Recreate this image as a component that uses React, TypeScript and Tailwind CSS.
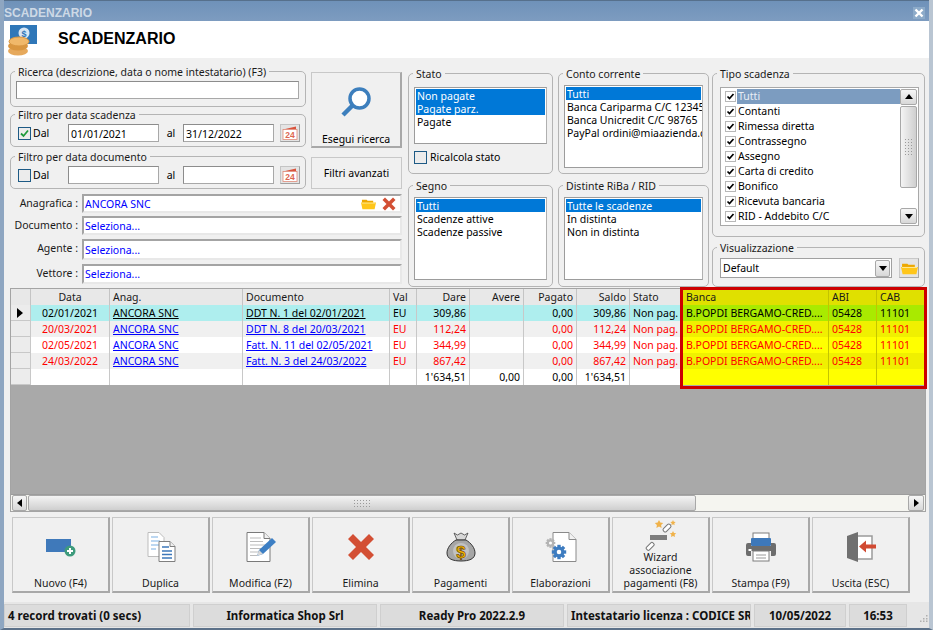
// App.tsx
import type { ReactNode } from "react";

function FolderIcon({ className }: { className?: string }) {
  return (
    <svg viewBox="0 0 16 12" className={className}>
      <path d="M1 1.500h5l1 1h6v2.500H1z" fill="#eda800" />
      <path d="M0 4.500h16l-1.500 7H1.500z" fill="#ffc61a" />
      <path d="M1 5h14" stroke="#fff2b0" strokeWidth="0.800" />
    </svg>
  );
}

function CrossIcon({ className }: { className?: string }) {
  return (
    <svg viewBox="0 0 32 32" className={className}>
      <path d="M3 8l5-5 8 8 8-8 5 5-8 8 8 8-5 5-8-8-8 8-5-5 8-8z" fill="#d34f34" />
    </svg>
  );
}

function Gear({ cx, cy, r, color }: { cx: number; cy: number; r: number; color: string }) {
  return (
    <g>
      {[0, 45, 90, 135].map((a) => (
        <rect
          key={a}
          x={cx - r * 0.28}
          y={cy - r * 1.2}
          width={r * 0.56}
          height={r * 2.4}
          fill={color}
          transform={`rotate(${a} ${cx} ${cy})`}
        />
      ))}
      <circle cx={cx} cy={cy} r={r * 0.9} fill={color} />
      <circle cx={cx} cy={cy} r={r * 0.38} fill="#fff" />
    </g>
  );
}

function CalendarButton() {
  return (
    <div className="w-[20px] h-[18px] ml-[6px] shrink-0 bg-[#e4e4e4] border border-[#c4c4c4] border-r-[#a0a0a0] border-b-[#a0a0a0] flex items-center justify-center">
      <svg viewBox="0 0 16 14" className="w-[16px] h-[14px]">
        <path d="M1 3.500L14 .500v3H1z" fill="#d9533c" />
        <rect x="1" y="3.500" width="14" height="10" fill="#fff" stroke="#e08a78" strokeWidth="0.800" />
        <text x="8" y="12" textAnchor="middle" fontSize="8.500" fontWeight="700" fill="#dd6650" fontFamily="Liberation Sans">
          24
        </text>
      </svg>
    </div>
  );
}

function Group({ title, className, children }: { title: string; className: string; children: ReactNode }) {
  return (
    <fieldset className={`border border-[#b4b4b4] rounded-[5px] shrink-0 ${className}`}>
      <legend className="ml-[4px] px-[3px] pt-[2px] leading-[12px] text-[#1a1a1a] whitespace-nowrap">{title}</legend>
      {children}
    </fieldset>
  );
}

function Field({ value, className }: { value?: string; className?: string }) {
  return (
    <div className={`h-[18px] bg-white border border-[#a8a8a8] border-t-[#8c8c8c] border-l-[#8c8c8c] pl-[2px] leading-[18px] text-black ${className ?? ""}`}>
      {value}
    </div>
  );
}

function CheckBox({ checked, className }: { checked?: boolean; className?: string }) {
  return (
    <div className={`w-[13px] h-[13px] border border-[#1d5a85] bg-[#ececec] shrink-0 flex items-center justify-center ${className ?? ""}`}>
      {checked && (
        <svg viewBox="0 0 11 11" className="w-[11px] h-[11px]">
          <path d="M2 5.500l2.500 2.500L9 2.500" fill="none" stroke="#1f9a3c" strokeWidth="1.800" />
        </svg>
      )}
    </div>
  );
}

function DateFilter({ title, checked, from, to }: { title: string; checked?: boolean; from?: string; to?: string }) {
  return (
    <Group title={title} className="w-[296px] h-[40px]">
      <div className="flex items-center pl-[7px] mt-[3px]">
        <CheckBox checked={checked} />
        <span className="w-[37px] pl-[2px] pt-[2px]">Dal</span>
        <Field value={from} className="w-[91px]" />
        <span className="w-[24px] pt-[2px] text-center">al</span>
        <Field value={to} className="w-[91px]" />
        <CalendarButton />
      </div>
    </Group>
  );
}

function PickerRow({ label, value, className, tools }: { label: string; value: string; className: string; tools?: boolean }) {
  return (
    <div className={`flex items-stretch ${className}`}>
      <div className="w-[68px] text-right leading-[19px] text-[#1a1a1a] whitespace-nowrap">{label} :</div>
      <div className="ml-[4px] flex-1 flex items-center bg-white border-2 border-[#a4a4a4] border-r-[#e8e8e8] border-b-[#e8e8e8] pl-[1px] text-[#0000ff]">
        <span className="flex-1 pt-[2px]">{value}</span>
        {tools && (
          <>
            <FolderIcon className="w-[15px] h-[12px] mr-[5px]" />
            <CrossIcon className="w-[16px] h-[16px] mr-[3px]" />
          </>
        )}
      </div>
    </div>
  );
}

function ListBox({ items, selected, className }: { items: string[]; selected: number[]; className: string }) {
  return (
    <div className={`border border-[#9c9c9c] border-r-[#b0b0b0] bg-white p-[1px] overflow-hidden ${className}`}>
      {items.map((item, i) => (
        <div
          key={item}
          className={`h-[13px] leading-[15px] pl-[1px] whitespace-nowrap ${selected.includes(i) ? "bg-[#0078d7] text-white" : "text-black"}`}
        >
          {item}
        </div>
      ))}
    </div>
  );
}

const tipoScadenza = [
  "Tutti",
  "Contanti",
  "Rimessa diretta",
  "Contrassegno",
  "Assegno",
  "Carta di credito",
  "Bonifico",
  "Ricevuta bancaria",
  "RID - Addebito C/C",
];

function ArrowButton({ dir, className }: { dir: "up" | "down" | "left" | "right"; className: string }) {
  const points = { up: "1,7 5,2 9,7", down: "1,3 5,8 9,3", left: "7,1 2,5 7,9", right: "3,1 8,5 3,9" }[dir];
  return (
    <div className={`shrink-0 flex items-center justify-center rounded-[2px] border border-[#a8a8a8] bg-gradient-to-b from-[#f6f6f6] to-[#d8d8d8] ${className}`}>
      <svg viewBox="0 0 10 10" className="w-[10px] h-[10px]">
        <polygon points={points} fill="#000" />
      </svg>
    </div>
  );
}

function Grip({ vertical }: { vertical?: boolean }) {
  return (
    <div className={vertical ? "grid grid-cols-3 gap-[2px]" : "grid grid-cols-6 gap-[2px]"}>
      {Array.from({ length: 18 }).map((_, i) => (
        <div key={i} className="w-[1px] h-[1px] bg-[#9a9a9a]" />
      ))}
    </div>
  );
}

const columns = ["", "Data", "Anag.", "Documento", "Val", "Dare", "Avere", "Pagato", "Saldo", "Stato", "Banca", "ABI", "CAB"];
const rightCols = [5, 6, 7, 8];

const rows = [
  ["", "02/01/2021", "ANCORA SNC", "DDT N. 1 del 02/01/2021", "EU", "309,86", "", "0,00", "309,86", "Non pag.", "B.POPDI BERGAMO-CRED....", "05428", "11101"],
  ["", "20/03/2021", "ANCORA SNC", "DDT N. 8 del 20/03/2021", "EU", "112,24", "", "0,00", "112,24", "Non pag.", "B.POPDI BERGAMO-CRED....", "05428", "11101"],
  ["", "02/05/2021", "ANCORA SNC", "Fatt. N. 11 del 02/05/2021", "EU", "344,99", "", "0,00", "344,99", "Non pag.", "B.POPDI BERGAMO-CRED....", "05428", "11101"],
  ["", "24/03/2022", "ANCORA SNC", "Fatt. N. 3 del 24/03/2022", "EU", "867,42", "", "0,00", "867,42", "Non pag.", "B.POPDI BERGAMO-CRED....", "05428", "11101"],
  ["", "", "", "", "", "1'634,51", "0,00", "0,00", "1'634,51", "", "", "", ""],
];

function cellBg(row: number, col: number) {
  if (col === 0) return "bg-[#ececec] border-b border-b-[#c8c8c8]";
  if (col >= 10) {
    if (row === 0) return "bg-[#a9ea00]";
    return row % 2 === 1 ? "bg-[#f0f000]" : "bg-[#ffff00]";
  }
  if (row === 0) return "bg-[#aeeeee]";
  return row % 2 === 1 ? "bg-[#f0f0f0]" : "bg-white";
}

function cellText(row: number, col: number) {
  if (row === 4 || row === 0) {
    return "text-black";
  }
  return col === 2 || col === 3 ? "text-[#0000ff]" : "text-[#ff0000]";
}

function Grid() {
  return (
    <div className="grid grid-cols-[20px_79px_133px_147px_27px_53px_54px_53px_53px_53px_146px_48px_48px] auto-rows-[16px]">
      {columns.map((c, i) => (
        <div
          key={i}
          className={`leading-[16px] px-[3px] border-r whitespace-nowrap overflow-hidden text-[#1a1a1a] ${
            i >= 10 ? "bg-[#e0e000] border-[#c4c400]" : "bg-[#e8e8e8] border-[#c4c4c4]"
          } ${i === 1 ? "text-center" : ""} ${rightCols.includes(i) ? "text-right" : ""}`}
        >
          {c}
        </div>
      ))}
      {rows.map((row, r) =>
        row.map((cell, c) => (
          <div
            key={`${r}-${c}`}
            className={`leading-[16px] px-[3px] border-r whitespace-nowrap overflow-hidden flex items-center ${c >= 10 ? "border-[#c4c400]" : "border-[#c8c8c8]"} ${cellBg(r, c)} ${cellText(r, c)} ${
              c === 1 ? "justify-center" : ""
            } ${rightCols.includes(c) ? "justify-end" : ""} ${c === 9 ? "pr-0" : ""}`}
          >
            {c === 0 && r === 0 ? (
              <svg viewBox="0 0 8 10" className="w-[8px] h-[10px] ml-[2px]">
                <polygon points="1,0 7,5 1,10" fill="#000" />
              </svg>
            ) : (
              <span className={c === 2 || c === 3 ? "underline" : ""}>{cell}</span>
            )}
          </div>
        ))
      )}
    </div>
  );
}

const NuovoIcon = (
  <svg viewBox="0 0 32 32" className="w-[32px] h-[32px]">
    <rect x="1" y="8" width="25" height="13" fill="#3f79ba" />
    <circle cx="25" cy="20" r="5.500" fill="#3e9b7c" />
    <path d="M25 17v6M22 20h6" stroke="#fff" strokeWidth="2" />
  </svg>
);

const DuplicaIcon = (
  <svg viewBox="0 0 32 32" className="w-[32px] h-[32px]">
    <path d="M3 1.500h11l5 5v19H3z" fill="#fff" stroke="#bdbdbd" />
    <path d="M6 6h7M6 10h9M6 14h9M6 18h5" stroke="#7ab0e4" strokeWidth="1.200" />
    <path d="M14 10.500h11l5 5v15H14z" fill="#fff" stroke="#7f7f7f" />
    <path d="M25 10.500v5h5" fill="#eee" stroke="#7f7f7f" />
    <path d="M17 16h7M17 20h10M17 23.500h10M17 27h10" stroke="#3d78ba" strokeWidth="1.300" />
  </svg>
);

const ModificaIcon = (
  <svg viewBox="0 0 32 32" className="w-[32px] h-[32px]">
    <path d="M2 1.500h17l6 6v23H2z" fill="#fff" stroke="#7a7a7a" />
    <path d="M19 1.500v6h6" fill="#f0f0f0" stroke="#7a7a7a" />
    <path d="M5 7h11M5 10.500h13M5 14h17M5 17.500h13M5 21h9M5 24.500h7" stroke="#bcbcbc" strokeWidth="1.200" />
    <path d="M12 25l2-6 13-12 4 4-13 12z" fill="#3d7fc4" />
    <path d="M12 25l2-6 4 4z" fill="#d7d7d7" />
  </svg>
);

const BagIcon = (
  <svg viewBox="0 0 32 32" className="w-[32px] h-[32px]">
    <path d="M9 2l3.500 2L16 2l3.500 2L23 2l-3 7h-8z" fill="#d8d8d8" stroke="#444" strokeWidth="0.800" />
    <path d="M11 9h10c5 3 9 8 9 13 0 6-6 8-14 8S2 28 2 22c0-5 4-10 9-13z" fill="#a6a6a6" stroke="#333" />
    <circle cx="16" cy="20" r="8" fill="#c2c2c2" />
    <text x="16" y="26.500" textAnchor="middle" fontSize="17" fontWeight="700" fill="#f5b400" stroke="#5a3a00" strokeWidth="0.600" fontFamily="Liberation Sans">
      $
    </text>
  </svg>
);

const ElaborazioniIcon = (
  <svg viewBox="0 0 32 32" className="w-[32px] h-[32px]">
    <path d="M8 1.500h16l7 7v22H8z" fill="#fff" stroke="#8a8a8a" />
    <path d="M24 1.500v7h7" fill="#f2f2f2" stroke="#8a8a8a" />
    <Gear cx={5.500} cy={12} r={4} color="#b4b4b4" />
    <Gear cx={14} cy={21} r={6} color="#3d7cc0" />
  </svg>
);

const WizardIcon = (
  <svg viewBox="0 0 32 32" className="w-[32px] h-[32px]">
    <path d="M14 1l1.300 2.600 2.900.4-2.100 2 .5 2.900-2.600-1.400-2.600 1.400.5-2.900-2.100-2 2.900-.4z" fill="#f0b24a" />
    <path d="M28 1l.8 1.700 1.900.3-1.400 1.300.3 1.900-1.600-.9-1.600.9.300-1.900-1.400-1.300 1.900-.3z" fill="#f0b24a" />
    <path d="M28 12l1 2 2.200.3-1.600 1.500.4 2.200-2-1-2 1 .4-2.200-1.600-1.500 2.200-.3z" fill="#f0b24a" />
    <rect x="20" y="4.500" width="4" height="9" rx="1.500" transform="rotate(45 22 9)" fill="#fff" stroke="#777" />
    <rect x="5" y="16" width="17" height="5" fill="#7d7d7d" />
    <rect x="3.500" y="23" width="4" height="9" rx="1.500" transform="rotate(45 5.500 27)" fill="#fff" stroke="#777" />
  </svg>
);

const StampaIcon = (
  <svg viewBox="0 0 32 32" className="w-[32px] h-[32px]">
    <rect x="8" y="2" width="16" height="8" fill="#fff" stroke="#7d7d7d" />
    <rect x="6" y="7" width="20" height="8" rx="1" fill="#3d78ba" />
    <path d="M3 12h3v3h20v-3h3a2 2 0 0 1 2 2v9a2 2 0 0 1-2 2h-3v-5H6v5H3a2 2 0 0 1-2-2v-9a2 2 0 0 1 2-2z" fill="#6d6d6d" />
    <rect x="3.500" y="18" width="3" height="2" fill="#fff" />
    <rect x="8" y="20" width="16" height="10" fill="#fff" stroke="#7d7d7d" />
    <path d="M11 24h10M11 27h10" stroke="#9a9a9a" />
  </svg>
);

const UscitaIcon = (
  <svg viewBox="0 0 32 32" className="w-[32px] h-[32px]">
    <path d="M13 5h14v23H13" fill="#fff" stroke="#9a9a9a" strokeWidth="1.500" />
    <path d="M2 5l11-4v30L2 27z" fill="#707070" />
    <path d="M14 15.500l7-6v4h10v4H21v4z" fill="#d14a32" />
  </svg>
);

const actions: { label: ReactNode; icon: ReactNode; wizard?: boolean }[] = [
  { label: "Nuovo (F4)", icon: NuovoIcon },
  { label: "Duplica", icon: DuplicaIcon },
  { label: "Modifica (F2)", icon: ModificaIcon },
  { label: "Elimina", icon: <CrossIcon className="w-[32px] h-[32px]" /> },
  { label: "Pagamenti", icon: BagIcon },
  { label: "Elaborazioni", icon: ElaborazioniIcon },
  { label: <>Wizard<br />associazione<br />pagamenti (F8)</>, icon: WizardIcon, wizard: true },
  { label: "Stampa (F9)", icon: StampaIcon },
  { label: "Uscita (ESC)", icon: UscitaIcon },
];

const statusPanels = [
  { text: "4 record trovati (0 secs)", w: "w-[186px]", left: true },
  { text: "Informatica Shop Srl", w: "w-[184px]" },
  { text: "Ready Pro 2022.2.9", w: "w-[184px]" },
  { text: "Intestatario licenza : CODICE SRL", w: "w-[184px]", left: true },
  { text: "10/05/2022", w: "w-[92px]" },
  { text: "16:53", w: "w-[58px]" },
];

export default function App() {
  return (
    <div className="w-[933px] h-[630px] flex flex-col bg-[#f0f0f0] border-x-[4px] border-l-[#8ea6c1] border-r-[#b9c5d2] border-b-[2px] border-b-[#5c7189] font-['Noto_Sans',sans-serif] text-[10.500px] overflow-hidden">
      {/* title bar */}
      <div className="h-[21px] -mx-[4px] pl-[4px] pt-[4px] pr-[4px] shrink-0 flex items-center justify-between bg-gradient-to-b from-[#6f92b9] to-[#7d9cc0] border-t border-[#56708c]">
        <span className="font-['Liberation_Sans',sans-serif] font-bold text-[12px] text-[#cdd9e6]">SCADENZARIO</span>
        <div className="w-[12px] h-[12px] mr-[4px] bg-[#8dabc9] flex items-center justify-center">
          <svg viewBox="0 0 10 10" className="w-[10px] h-[10px]">
            <path d="M1.500 1.500l7 7M8.500 1.500l-7 7" stroke="#fff" strokeWidth="2.400" />
          </svg>
        </div>
      </div>

      {/* header */}
      <div className="h-[37px] shrink-0 bg-white flex items-center">
        <svg viewBox="0 0 32 32" className="w-[32px] h-[32px] ml-[3px]">
          <rect x="3" y="1" width="27" height="19" fill="#2f77b8" />
          <circle cx="17" cy="9" r="5.500" fill="#d8e6f3" />
          <text x="17" y="12.500" textAnchor="middle" fontSize="9" fontWeight="700" fill="#2f77b8" fontFamily="Liberation Sans">$</text>
          <ellipse cx="11" cy="27" rx="10" ry="4.500" fill="#e6a95c" />
          <ellipse cx="11" cy="22" rx="10" ry="4.500" fill="#d99640" />
          <ellipse cx="12" cy="17.500" rx="10" ry="4.500" fill="#f0b86a" stroke="#d99640" />
        </svg>
        <h1 className="ml-[19px] pb-[2px] font-['Liberation_Sans',sans-serif] font-bold text-[16px] text-black">SCADENZARIO</h1>
      </div>

      {/* filtri */}
      <div className="h-[230px] shrink-0 pl-[6px] pt-[6px] flex">
        <div className="w-[392px] shrink-0">
          <div className="flex gap-[5px]">
            <div className="w-[296px]">
              <Group title="Ricerca (descrizione, data o nome intestatario) (F3)" className="w-[296px] h-[43px]">
                <div className="px-[5px] mt-[3px]">
                  <Field className="w-[283px]" />
                </div>
              </Group>
              <DateFilter title="Filtro per data scadenza" checked from="01/01/2021" to="31/12/2022" />
              <div className="h-[2px]" />
              <DateFilter title="Filtro per data documento" />
            </div>
            <div className="w-[91px] pt-[8px]">
              <button className="w-[91px] h-[76px] flex flex-col items-center border border-[#c8c8c8] border-r-2 border-b-2 border-r-[#a8a8a8] border-b-[#a8a8a8]">
                <svg viewBox="0 0 32 32" className="w-[32px] h-[32px] mt-[13px]">
                  <circle cx="19.500" cy="12.500" r="9.500" fill="#fff" stroke="#3d7fbd" strokeWidth="3.500" />
                  <path d="M12.500 19.500L3 29" stroke="#3d7fbd" strokeWidth="4.500" />
                </svg>
                <span className="mt-auto leading-[14px]">Esegui ricerca</span>
              </button>
              <button className="w-[91px] h-[32px] mt-[9px] pt-[2px] border border-[#c8c8c8]">Filtri avanzati</button>
            </div>
          </div>
          <PickerRow label="Anagrafica" value="ANCORA SNC" className="h-[19px] mt-[5px]" tools />
          <PickerRow label="Documento" value="Seleziona..." className="h-[19px] mt-[3px]" />
          <PickerRow label="Agente" value="Seleziona..." className="h-[21px] mt-[4px]" />
          <PickerRow label="Vettore" value="Seleziona..." className="h-[20px] mt-[4px]" />
        </div>

        <div className="w-[144px] ml-[6px] mt-[2px] shrink-0">
          <Group title="Stato" className="w-[144px] h-[108px]">
            <div className="px-[5px] mt-[7px]">
              <ListBox items={["Non pagate", "Pagate parz.", "Pagate"]} selected={[0, 1]} className="h-[57px] w-[133px] pt-[1px]" />
              <div className="flex items-center mt-[6px]">
                <CheckBox />
                <span className="ml-[3px]">Ricalcola stato</span>
              </div>
            </div>
          </Group>
          <Group title="Segno" className="w-[144px] h-[109px] mt-[4px]">
            <div className="px-[5px] mt-[5px]">
              <ListBox items={["Tutti", "Scadenze attive", "Scadenze passive"]} selected={[0]} className="h-[83px] w-[133px]" />
            </div>
          </Group>
        </div>

        <div className="w-[151px] ml-[6px] mt-[2px] shrink-0">
          <Group title="Conto corrente" className="w-[151px] h-[108px]">
            <div className="px-[5px] mt-[5px]">
              <ListBox
                items={["Tutti", "Banca Cariparma C/C 12345", "Banca Unicredit C/C 98765", "PayPal ordini@miaazienda.com"]}
                selected={[0]}
                className="h-[83px] w-[139px]"
              />
            </div>
          </Group>
          <Group title="Distinte RiBa / RID" className="w-[151px] h-[109px] mt-[4px]">
            <div className="px-[5px] mt-[5px]">
              <ListBox items={["Tutte le scadenze", "In distinta", "Non in distinta"]} selected={[0]} className="h-[83px] w-[139px]" />
            </div>
          </Group>
        </div>

        <div className="w-[213px] ml-[3px] mt-[2px] shrink-0">
          <Group title="Tipo scadenza" className="w-[213px] h-[171px]">
            <div className="ml-[7px] mt-[7px] w-[199px] h-[139px] flex border border-[#a8a8a8] bg-white px-[1px]">
              <div className="flex-1 pt-[1px]">
                {tipoScadenza.map((t, i) => (
                  <div key={t} className="h-[15px] flex items-center pl-[3px]">
                    <div className="w-[11px] h-[11px] border border-[#b8b8b8] bg-white shrink-0 flex items-center justify-center">
                      <svg viewBox="0 0 9 9" className="w-[9px] h-[9px]">
                        <path d="M1.500 4.500l2 2L7.500 2" fill="none" stroke="#000" strokeWidth="1.700" />
                      </svg>
                    </div>
                    <span className={`ml-[1px] flex-1 h-[15px] leading-[15px] pl-[1px] ${i === 0 ? "bg-[#7c9cc0] text-[#e8eef5]" : "text-black"}`}>{t}</span>
                  </div>
                ))}
              </div>
              <div className="w-[17px] flex flex-col pt-[1px] pb-[1px]">
                <ArrowButton dir="up" className="h-[16px]" />
                <div className="h-[82px] mt-[1px] rounded-[2px] border border-[#a8a8a8] bg-gradient-to-r from-[#f4f4f4] to-[#cfcfcf] flex items-center justify-center">
                  <Grip vertical />
                </div>
                <div className="flex-1" />
                <ArrowButton dir="down" className="h-[16px]" />
              </div>
            </div>
          </Group>
          <Group title="Visualizzazione" className="w-[213px] h-[47px] mt-[3px]">
            <div className="flex ml-[7px] mt-[4px]">
              <div className="w-[172px] h-[20px] bg-white border border-[#a0a0a0] flex items-center pl-[2px]">
                <span className="flex-1 pt-[2px]">Default</span>
                <ArrowButton dir="down" className="w-[15px] h-[17px] mr-[1px]" />
              </div>
              <div className="w-[20px] h-[20px] ml-[7px] bg-[#e4e4e4] border border-[#c8c8c8] border-r-[#a8a8a8] border-b-[#a8a8a8] flex items-center justify-center">
                <FolderIcon className="w-[17px] h-[13px]" />
              </div>
            </div>
          </Group>
        </div>
      </div>

      {/* griglia */}
      <div className="relative h-[224px] w-[916px] shrink-0 ml-[6px] flex flex-col border border-[#a4a4a4] bg-[#a9a9a9]">
        <Grid />
        <div className="flex-1" />
        <div className="h-[17px] flex bg-[#f5f5f0] border-t border-[#9c9c9c]">
          <ArrowButton dir="left" className="w-[15px] ml-[1px]" />
          <div className="w-[668px] ml-[1px] rounded-[2px] border border-[#a8a8a8] bg-gradient-to-b from-[#f4f4f4] to-[#cfcfcf] flex items-center justify-center">
            <Grip />
          </div>
          <div className="flex-1" />
          <ArrowButton dir="right" className="w-[16px] mr-[1px]" />
        </div>
        <div className="absolute left-[669px] -top-[2px] w-[247px] h-[102px] border-[3px] border-[#cc0000]" />
      </div>

      {/* azioni */}
      <div className="flex gap-[2px] ml-[8px] mt-[5px] shrink-0">
        {actions.map((a, i) => (
          <button
            key={i}
            className={`w-[98px] h-[76px] flex flex-col items-center border border-[#c8c8c8] border-r-2 border-b-2 border-r-[#a8a8a8] border-b-[#a8a8a8] ${a.wizard ? "pt-[1px]" : "pt-[13px]"}`}
          >
            {a.icon}
            <span className="mt-auto pb-[1px] leading-[13px] text-[#1a1a1a]">{a.label}</span>
          </button>
        ))}
      </div>

      {/* stato */}
      <div className="mt-[9px] h-[26px] shrink-0 bg-[#e6e6e6] flex gap-[3px] items-center font-bold text-[11.500px] text-[#111]">
        {statusPanels.map((p) => (
          <div
            key={p.text}
            className={`h-[23px] ${p.w} shrink-0 bg-[#dcdcdc] border border-[#cfcfcf] leading-[21px] whitespace-nowrap overflow-hidden ${p.left ? "pl-[3px]" : "text-center"}`}
          >
            {p.text}
          </div>
        ))}
        <svg viewBox="0 0 8 8" className="w-[8px] h-[8px] ml-[10px] mt-[6px]">
          <path d="M6 1h1.500v1.500H6zM3 4h1.500v1.500H3zM6 4h1.500v1.500H6zM0 6.500h1.500V8H0zM3 6.500h1.500V8H3zM6 6.500h1.500V8H6z" fill="#b0b0b0" />
        </svg>
      </div>
    </div>
  );
}
